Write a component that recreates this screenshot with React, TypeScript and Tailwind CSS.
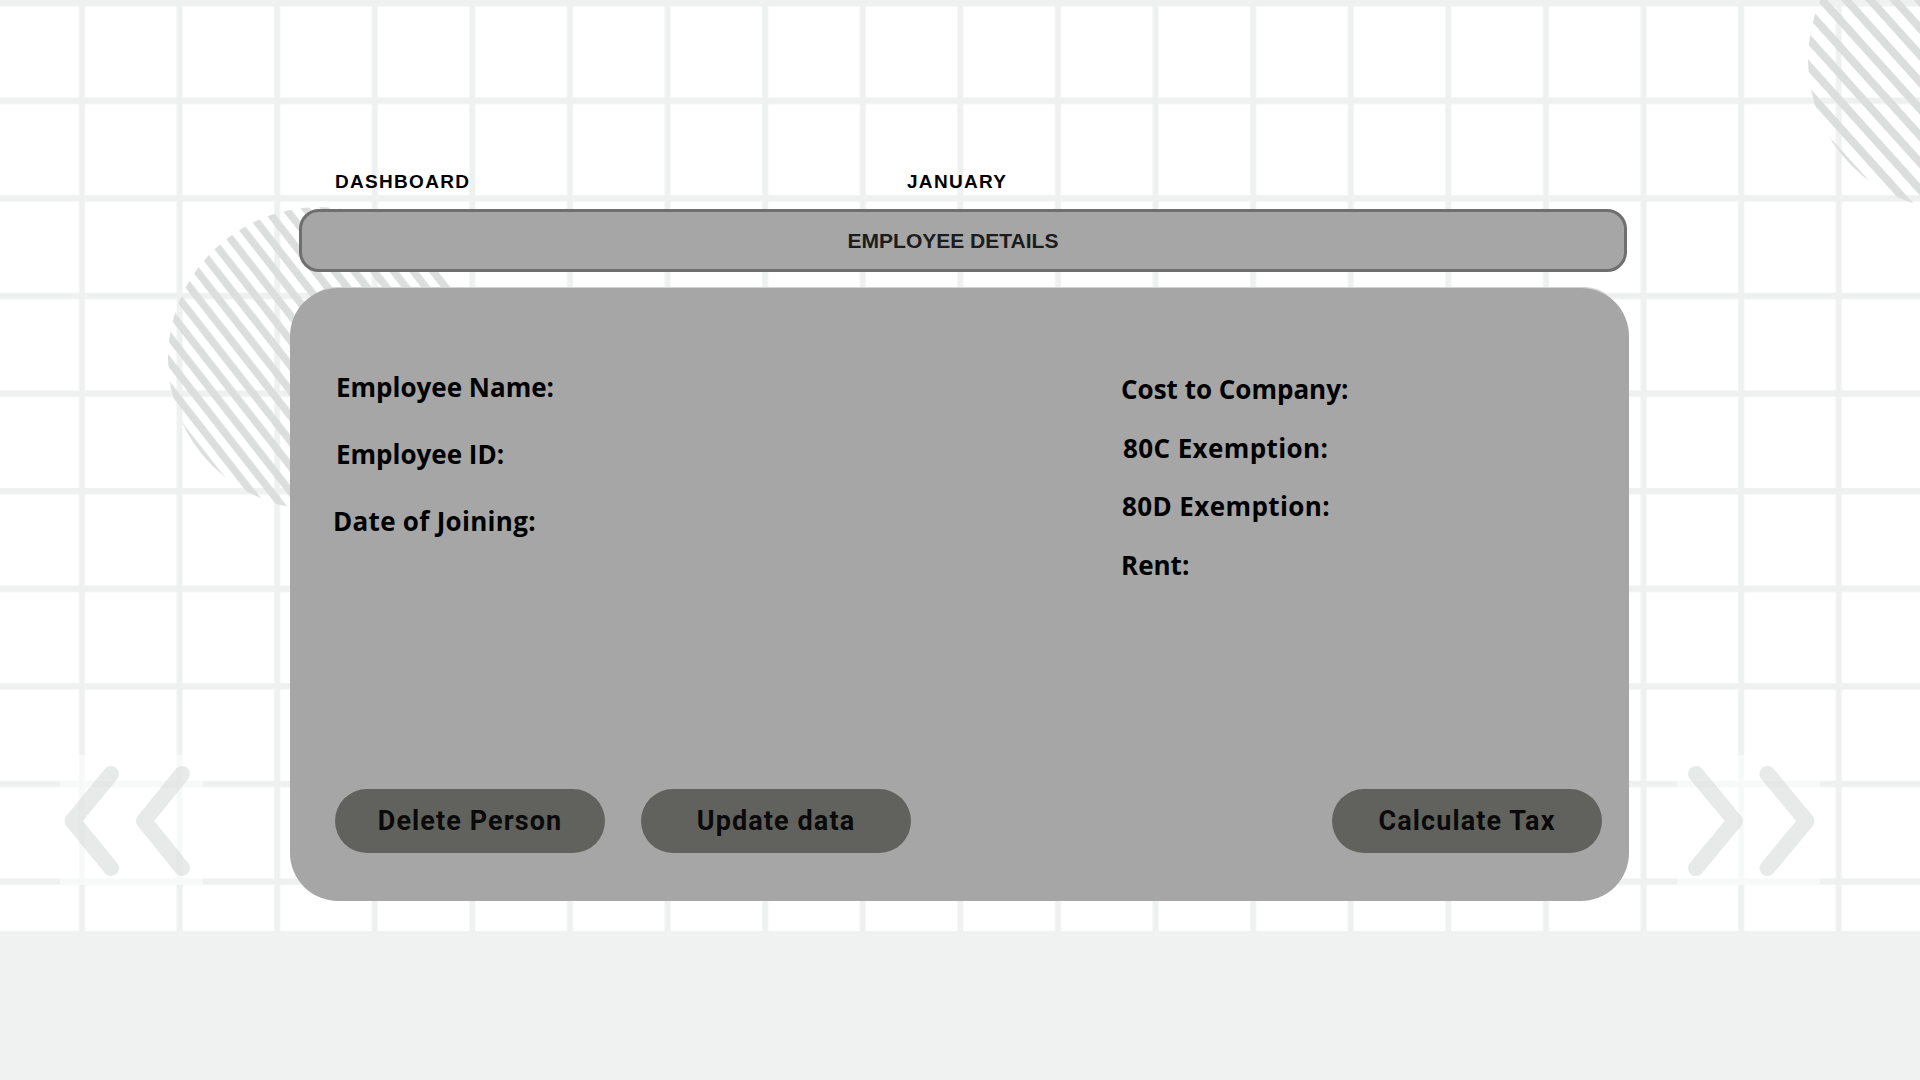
import React from "react";

function Background() {
  return (
    <svg
      className="absolute left-0 top-0"
      width="1920"
      height="1080"
      viewBox="0 0 1920 1080"
    >
      <defs>
        <pattern id="grid" patternUnits="userSpaceOnUse" width="97.6" height="97.6">
          <rect x="0" y="0" width="97.6" height="6.5" fill="#eff1f0" />
          <rect x="79" y="0" width="6" height="97.6" fill="#eff1f0" />
        </pattern>
        <pattern
          id="stripes"
          patternUnits="userSpaceOnUse"
          width="15.5"
          height="15.5"
          patternTransform="rotate(-38)"
        >
          <rect x="0" y="0" width="7.5" height="15.5" fill="#dcdedd" />
        </pattern>
        <pattern
          id="stripes2"
          patternUnits="userSpaceOnUse"
          width="18"
          height="18"
          patternTransform="rotate(-42)"
        >
          <rect x="0" y="0" width="8" height="18" fill="#dcdedd" />
        </pattern>
      </defs>
      <rect x="0" y="0" width="1920" height="931" fill="#ffffff" />
      <rect x="0" y="0" width="1920" height="931" fill="url(#grid)" />
      <circle cx="319.5" cy="358.5" r="151.5" fill="url(#stripes)" />
      <circle cx="1958" cy="60" r="150" fill="url(#stripes2)" />
      <rect x="60" y="755" width="143" height="130" fill="#ffffff" fillOpacity="0.5" />
      <rect x="1677" y="755" width="143" height="130" fill="#ffffff" fillOpacity="0.5" />
      <g
        fill="none"
        stroke="#d9dbda"
        strokeOpacity="0.6"
        strokeWidth="16"
        strokeLinecap="round"
        strokeLinejoin="round"
      >
        <polyline points="111,774 72.5,821 111,868" />
        <polyline points="182,774 144,821 182,868" />
        <polyline points="1696,774 1735,821 1696,868" />
        <polyline points="1767.5,774 1806.5,821 1767.5,868" />
      </g>
    </svg>
  );
}

function PillButton({ label, className = "" }: { label: string; className?: string }) {
  return (
    <button
      className={
        "w-[270px] h-[64px] rounded-full bg-[#61625d] flex items-center justify-center font-['Roboto',sans-serif] font-bold text-[27px] tracking-[1.1px] text-[#0a0a0a] " +
        className
      }
    >
      {label}
    </button>
  );
}

export default function App() {
  return (
    <div className="relative w-[1920px] h-[1080px] overflow-hidden bg-[#f0f2f1]">
      <Background />
      <main className="relative ml-[290px] w-[1339px] pt-[172px]">
        <div className="flex pl-[45px] font-['Liberation_Sans',Arial,sans-serif] text-[19px] leading-[19px] font-bold tracking-[1.3px] text-black">
          <span className="w-[572px]">DASHBOARD</span>
          <span>JANUARY</span>
        </div>
        <div className="mt-[18px] ml-[9px] w-[1328px] h-[63px] rounded-[20px] border-[3px] border-[#6f6f6f] bg-[#a6a6a6] flex items-center justify-center pr-[20px]">
          <h1 className="font-['Liberation_Sans',Arial,sans-serif] font-bold text-[21px] leading-[21px] text-[#1c1c1c]">
            EMPLOYEE DETAILS
          </h1>
        </div>
        <section className="relative mt-[16px] h-[613px]">
          <div className="absolute left-[10px] right-[8px] top-[-1px] bottom-[1px] rounded-[36px] bg-[#d2d2d2]" />
          <div className="relative h-full rounded-[48px] bg-[#a6a6a6] flex flex-col">
            <div className="flex pt-[86px] font-['Open_Sans',sans-serif] font-bold text-[26px] leading-[26px] text-black">
              <div className="w-[831px] pl-[46px] flex flex-col gap-[41px]">
                <p>Employee Name:</p>
                <p>Employee ID:</p>
                <p className="-ml-[3px] tracking-[0.3px]">Date of Joining:</p>
              </div>
              <div className="flex flex-col gap-[32.7px] pt-[2px]">
                <p>Cost to Company:</p>
                <p className="ml-[2px] tracking-[0.4px]">80C Exemption:</p>
                <p className="ml-[1px] tracking-[0.4px]">80D Exemption:</p>
                <p>Rent:</p>
              </div>
            </div>
            <div className="mt-auto mb-[48px] flex pl-[45px] pr-[27px]">
              <PillButton label="Delete Person" />
              <PillButton label="Update data" className="ml-[36px]" />
              <PillButton label="Calculate Tax" className="ml-auto" />
            </div>
          </div>
        </section>
      </main>
    </div>
  );
}
